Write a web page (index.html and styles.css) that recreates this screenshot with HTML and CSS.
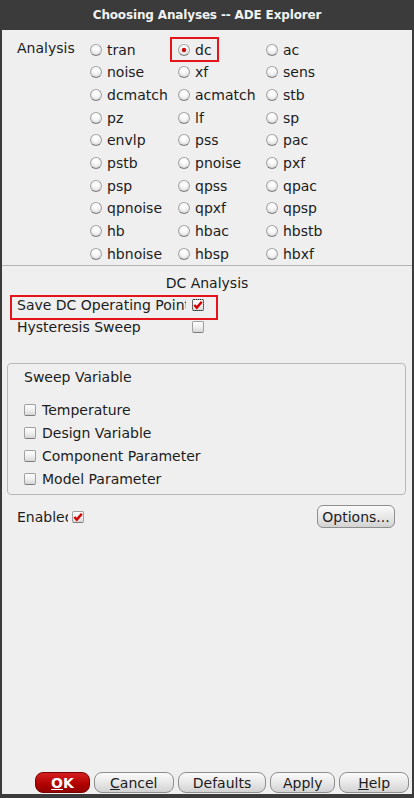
FILE: index.html
```html
<!DOCTYPE html>
<html lang="en">
<head>
    <meta charset="UTF-8">
    <meta name="viewport" content="width=device-width, initial-scale=1.0">
    <title>Choosing Analyses -- ADE Explorer</title>
    <link rel="stylesheet" href="styles.css">
</head>
<body>
    <div class="window">
        <header class="titlebar">Choosing Analyses -- ADE Explorer</header>

        <div class="content">
            <!-- Analysis type selection -->
            <div class="analysis">
                <span class="analysis-label">Analysis</span>
                <div class="radio-grid">
                    <label class="radio"><span class="dot"></span>tran</label>
                    <label class="radio"><span class="dot on"></span>dc</label>
                    <label class="radio"><span class="dot"></span>ac</label>
                    <label class="radio"><span class="dot"></span>noise</label>
                    <label class="radio"><span class="dot"></span>xf</label>
                    <label class="radio"><span class="dot"></span>sens</label>
                    <label class="radio"><span class="dot"></span>dcmatch</label>
                    <label class="radio"><span class="dot"></span>acmatch</label>
                    <label class="radio"><span class="dot"></span>stb</label>
                    <label class="radio"><span class="dot"></span>pz</label>
                    <label class="radio"><span class="dot"></span>lf</label>
                    <label class="radio"><span class="dot"></span>sp</label>
                    <label class="radio"><span class="dot"></span>envlp</label>
                    <label class="radio"><span class="dot"></span>pss</label>
                    <label class="radio"><span class="dot"></span>pac</label>
                    <label class="radio"><span class="dot"></span>pstb</label>
                    <label class="radio"><span class="dot"></span>pnoise</label>
                    <label class="radio"><span class="dot"></span>pxf</label>
                    <label class="radio"><span class="dot"></span>psp</label>
                    <label class="radio"><span class="dot"></span>qpss</label>
                    <label class="radio"><span class="dot"></span>qpac</label>
                    <label class="radio"><span class="dot"></span>qpnoise</label>
                    <label class="radio"><span class="dot"></span>qpxf</label>
                    <label class="radio"><span class="dot"></span>qpsp</label>
                    <label class="radio"><span class="dot"></span>hb</label>
                    <label class="radio"><span class="dot"></span>hbac</label>
                    <label class="radio"><span class="dot"></span>hbstb</label>
                    <label class="radio"><span class="dot"></span>hbnoise</label>
                    <label class="radio"><span class="dot"></span>hbsp</label>
                    <label class="radio"><span class="dot"></span>hbxf</label>
                </div>
            </div>

            <hr class="separator">

            <!-- DC options -->
            <div class="dc-title">DC Analysis</div>
            <div class="option-row">
                <span class="option-label">Save DC Operating Point</span>
                <span class="check checked focus">
                    <svg viewBox="0 0 12 12"><path d="M2.3 6 L4.8 8.6 L9.8 2.8" /></svg>
                </span>
            </div>
            <div class="option-row">
                <span class="option-label">Hysteresis Sweep</span>
                <span class="check"></span>
            </div>

            <fieldset class="sweep-box">
                <div class="sweep-title">Sweep Variable</div>
                <div class="sweep-list">
                    <label class="sweep-item"><span class="check"></span>Temperature</label>
                    <label class="sweep-item"><span class="check"></span>Design Variable</label>
                    <label class="sweep-item"><span class="check"></span>Component Parameter</label>
                    <label class="sweep-item"><span class="check"></span>Model Parameter</label>
                </div>
            </fieldset>

            <div class="enable-row">
                <span class="enable-label">Enabled</span>
                <span class="check checked">
                    <svg viewBox="0 0 12 12"><path d="M2.3 6 L4.8 8.6 L9.8 2.8" /></svg>
                </span>
                <button class="btn options-btn">Options...</button>
            </div>

            <div class="button-bar">
                <button class="btn btn-ok"><u>O</u>K</button>
                <button class="btn btn-cancel"><u>C</u>ancel</button>
                <button class="btn btn-defaults">Defaults</button>
                <button class="btn btn-apply">Apply</button>
                <button class="btn btn-help"><u>H</u>elp</button>
            </div>

            <!-- highlight boxes -->
            <div class="mark mark-dc"></div>
            <div class="mark mark-save"></div>
        </div>
    </div>
</body>
</html>
```

FILE: styles.css
```css
body {
    margin: 0;
    padding: 0;
    font-family: "DejaVu Sans", "Liberation Sans", sans-serif;
    font-size: 14px;
    color: #1c1c1c;
    background-color: #3a3a3a;
}
.window {
    width: 414px;
    height: 798px;
    background-color: #3b3b3b;
    display: flex;
    flex-direction: column;
    box-sizing: border-box;
    padding: 0 2px 4px 2px;
}
.titlebar {
    height: 30px;
    line-height: 30px;
    text-align: center;
    color: #f2f2f2;
    font-weight: bold;
    font-size: 12px;
    letter-spacing: -0.15px;
    flex-shrink: 0;
}
.content {
    position: relative;
    flex: 1;
    background-color: #efefef;
    display: flex;
    flex-direction: column;
}
.analysis {
    display: flex;
    padding: 8.5px 0 0 15px;
}
.analysis-label {
    width: 73px;
    line-height: 18px;
}
.radio-grid {
    display: grid;
    grid-template-columns: repeat(3, 88px);
    grid-auto-rows: 22.67px;
}
.radio {
    display: flex;
    align-items: center;
}
.dot {
    width: 12px;
    height: 12px;
    box-sizing: border-box;
    border-radius: 50%;
    border: 1px solid #a4a4a4;
    border-bottom-color: #7e7e7e;
    background: radial-gradient(circle at 50% 30%, #ffffff 25%, #e4e4e4 70%, #c8c8c8 100%);
    margin: 0 5px 0 0;
    position: relative;
}
.dot.on::after {
    content: "";
    position: absolute;
    left: 3px;
    top: 3px;
    width: 4px;
    height: 4px;
    border-radius: 50%;
    background-color: #d00000;
    box-shadow: 0 0 1px #a00000;
}
.separator {
    border: none;
    border-top: 1px solid #b4b4b4;
    margin: 0;
}
.dc-title {
    text-align: center;
    height: 22px;
    line-height: 22px;
    margin-top: 6px;
}
.option-row {
    display: flex;
    align-items: center;
    height: 22px;
    padding-left: 15px;
}
.option-label {
    width: 169px;
    margin-right: 6px;
    white-space: nowrap;
    overflow: hidden;
}
.check {
    width: 12px;
    height: 12px;
    box-sizing: border-box;
    border: 1px solid #a0a0a0;
    border-bottom-color: #7c7c7c;
    border-radius: 2px;
    background: linear-gradient(#ffffff, #ececec 60%, #d6d6d6);
    display: inline-flex;
    flex-shrink: 0;
    position: relative;
}
.check svg {
    width: 12px;
    height: 12px;
    position: absolute;
    left: -1px;
    top: -1px;
}
.check svg path {
    fill: none;
    stroke: #d40000;
    stroke-width: 2.4;
}
.check.focus {
    outline: 1px dotted #222;
    outline-offset: -1px;
}
.sweep-box {
    margin: 25px 6px 0 5px;
    padding: 2px 0 3px 0;
    border: 1px solid #b8b8b8;
    border-radius: 4px;
    height: 132px;
    box-sizing: border-box;
    min-width: 0;
}
.sweep-title {
    height: 22px;
    line-height: 22px;
    padding-left: 16px;
}
.sweep-list {
    margin-top: 10.5px;
    padding-left: 16px;
}
.sweep-item {
    display: flex;
    align-items: center;
    height: 23px;
}
.sweep-item .check {
    margin-right: 6px;
}
.enable-row {
    display: flex;
    align-items: center;
    margin-top: 10px;
    padding: 0 17px 0 15px;
    height: 23px;
}
.enable-label {
    width: 51px;
    margin-right: 4px;
    white-space: nowrap;
    overflow: hidden;
}
.btn {
    font-family: "DejaVu Sans", "Liberation Sans", sans-serif;
    font-size: 14px;
    color: #1c1c1c;
    border: 1px solid #8e8e8e;
    border-radius: 8px;
    background: linear-gradient(#fbfbfb, #e6e6e6 55%, #d2d2d2);
    padding: 0;
    height: 21px;
    box-sizing: border-box;
}
.options-btn {
    margin-left: auto;
    width: 78px;
    height: 23px;
    border-radius: 6px;
}
.button-bar {
    margin-top: auto;
    display: flex;
    gap: 4px;
    padding: 0 3px 1px 33px;
}
.btn-ok {
    width: 55px;
    background: linear-gradient(#d52020, #b00000 60%, #930000);
    border-color: #7a0000;
    color: #ffffff;
    font-weight: bold;
}
.btn-cancel { width: 80px; }
.btn-defaults { width: 89px; }
.btn-apply { width: 65px; }
.btn-help { width: 70px; }
.mark {
    position: absolute;
    border: 2px solid #e5141b;
}
.mark-dc {
    left: 168px;
    top: 7px;
    width: 45px;
    height: 21px;
}
.mark-save {
    left: 8px;
    top: 265px;
    width: 204px;
    height: 21px;
}
```
